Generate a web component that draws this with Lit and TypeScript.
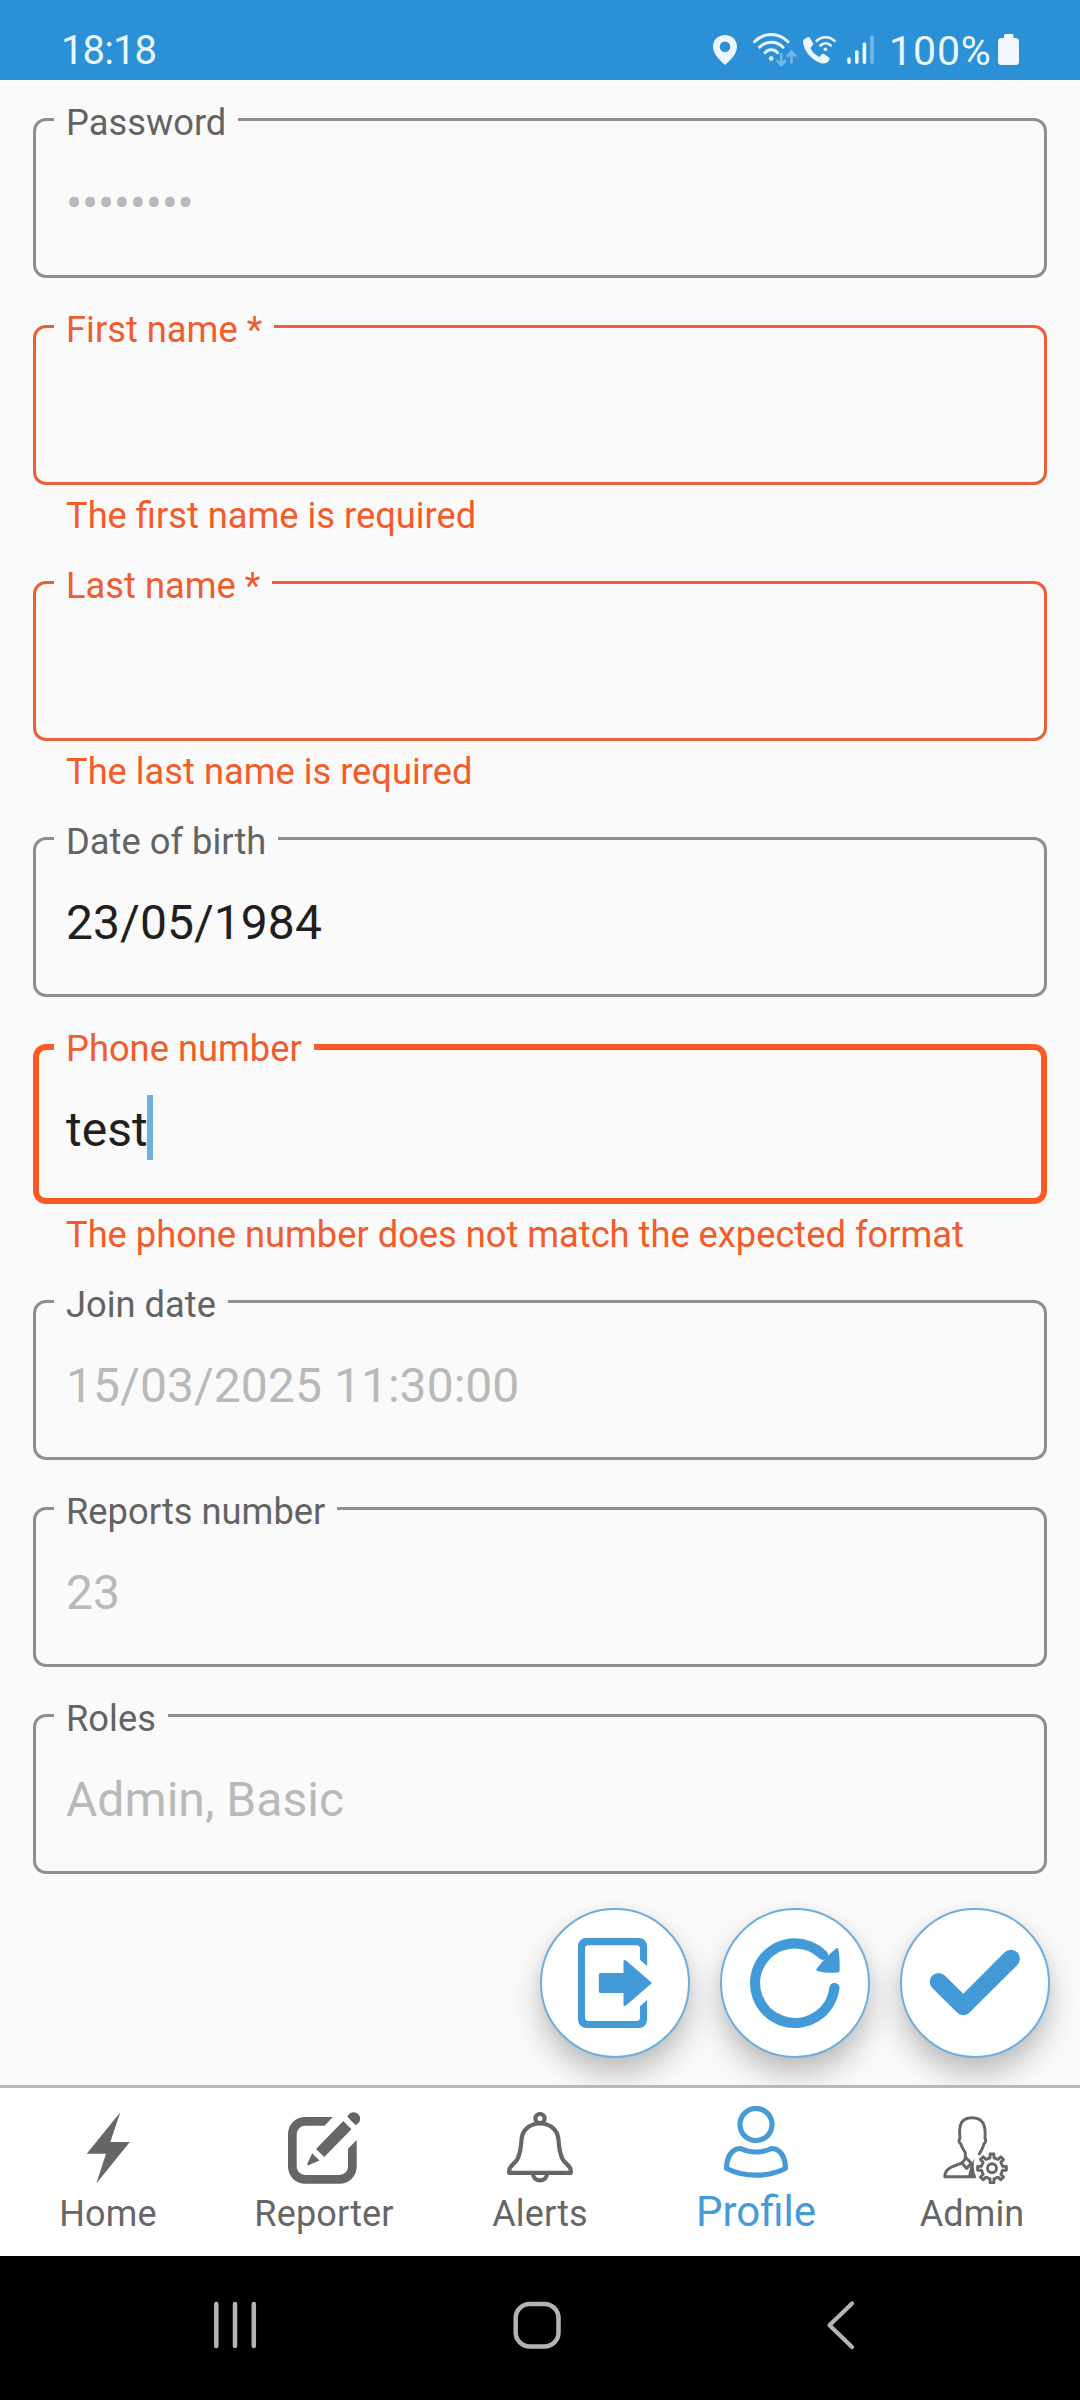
import { LitElement, html, svg, css, nothing } from "lit";
import { customElement, property } from "lit/decorators.js";
import { classMap } from "lit/directives/class-map.js";

interface Field {
  label: string;
  value: string;
  disabled?: boolean;
  masked?: boolean;
  focused?: boolean;
  error?: string;
}

const FIELDS: Field[] = [
  { label: "Password", value: "••••••••", disabled: true, masked: true },
  { label: "First name *", value: "", error: "The first name is required" },
  { label: "Last name *", value: "", error: "The last name is required" },
  { label: "Date of birth", value: "23/05/1984" },
  {
    label: "Phone number",
    value: "test",
    focused: true,
    error: "The phone number does not match the expected format",
  },
  { label: "Join date", value: "15/03/2025 11:30:00", disabled: true },
  { label: "Reports number", value: "23", disabled: true },
  { label: "Roles", value: "Admin, Basic", disabled: true },
];

/** Outline of a cog with square teeth, centred on (cx, cy). */
function gearPath(cx: number, cy: number, outer: number, root: number, teeth: number): string {
  const points: string[] = [];
  const step = (Math.PI * 2) / teeth;
  for (let i = 0; i < teeth; i++) {
    const a = i * step - Math.PI / 2;
    for (const [r, d] of [
      [root, -0.24],
      [outer, -0.17],
      [outer, 0.17],
      [root, 0.24],
    ]) {
      const t = a + d * step;
      points.push(`${(cx + r * Math.cos(t)).toFixed(2)} ${(cy + r * Math.sin(t)).toFixed(2)}`);
    }
  }
  return `M${points.join("L")}Z`;
}

const TAB_ICONS: Record<string, unknown> = {
  Home: svg`<path fill="currentColor" d="M48.3 .2 14.7 41.7H34L24.3 71.6 57.8 30H38.3Z"/>`,
  Reporter: svg`
    <path fill="currentColor" d="M44.8 5H17A17 17 0 0 0 0 22V54.7a17 17 0 0 0 17 17H51.7a17 17 0 0 0 17-17V28L60 36.8V54.5A8.5 8.5 0 0 1 51.500 63H17.2A8.500 8.500 0 0 1 8.700 54.500V22.200A8.500 8.500 0 0 1 17.200 13.700H36.500Z"/>
    <path fill="currentColor" d="M55.300 9 63.400 17.200 36.200 45 28 37ZM24.200 41.300 31.500 48.400 20.500 53.200Q18.800 53.500 19.300 51.800ZM59.400 4.800A6.500 6.500 0 1 1 67.400 13Z"/>`,
  Alerts: svg`
    <g fill="none" stroke="currentColor" stroke-width="4.200">
      <circle cx="36" cy="6.600" r="4.600"/>
      <path stroke-linejoin="round" d="M36 11.500C25.500 11.500 18.500 18 17.600 27C17 36 16 42 13.500 47C10.500 52.500 5.200 53.500 5.200 59V60.900H66.800V59C66.800 53.500 61.500 52.500 58.500 47C56 42 55 36 54.400 27C53.500 18 46.500 11.500 36 11.500Z"/>
      <path d="M28.800 62A7.300 7.700 0 0 0 43.200 62"/>
    </g>`,
  Profile: svg`
    <g fill="none" stroke="currentColor" stroke-width="5.200" stroke-linejoin="round">
      <circle cx="36" cy="18.500" r="16"/>
      <path d="M6.600 62.500C6.600 51 11.500 42.800 20.500 42.500Q28 46 36 46T51.500 42.500C60.500 42.800 65.400 51 65.400 62.500Q52 69.200 36 69.200T6.600 62.500Z"/>
    </g>`,
  Admin: svg`
    <g fill="none" stroke="currentColor" stroke-width="2.900" stroke-linejoin="round">
      <path d="M29.300 46.500V40.500C27 37 25.300 34.500 24.900 31.800C22.800 30.500 22.300 28 24 26.500C22.500 13 25 5.700 36 5.700C47 5.700 50 13 49 26.500C50.300 28 49.800 30.500 47.900 31.800C47.300 35 45.600 38.500 42.700 43"/>
      <path d="M26.500 50.800C17 54 8.800 56.500 8.800 64.700H39.500"/>
      <path d="M30 45.800 35.300 51.300 30.700 56.500 25.900 51Z"/>
      <path d="${gearPath(56, 56.300, 14.500, 10.700, 8)}"/>
      <circle cx="56" cy="56.300" r="4.500"/>
    </g>
    <path fill="currentColor" d="M38.500 46.500 34.500 54 31.700 65.500H40.300C37.500 59 37 53 38.500 46.500Z"/>`,
};

const ACTIONS = [
  {
    name: "Sign out",
    icon: svg`
      <path fill="currentColor" d="M46 30H99A8 8 0 0 1 107.100 38V58L100 51.800V40A3 3 0 0 0 97.500 37.200H47.500A3 3 0 0 0 45 40V110A3 3 0 0 0 47.500 112.900H97.500A3 3 0 0 0 100 110V98.200L107.100 92V112A8 8 0 0 1 99 119.900H46A8 8 0 0 1 38 112V38A8 8 0 0 1 46 30Z"/>
      <path fill="currentColor" d="M60.500 65H83.500V53.500Q83.700 51 86 52.500L112 75 86 97.500Q83.700 99 83.500 96.500V85H60.500Q58.800 85 58.800 83.200V66.800Q58.800 65 60.500 65Z"/>`,
  },
  {
    name: "Reset",
    icon: svg`
      <path fill="none" stroke="currentColor" stroke-width="10.200" stroke-linecap="round" d="M114.400 80A39.800 39.800 0 1 1 103 47"/>
      <path fill="currentColor" d="M109.800 46 116 40.400Q117.600 39.200 118.300 41Q120 50 119.600 62.800Q119.500 64.400 118 64.500Q107 65.500 98 63.300Q95.200 62.300 96.800 60.500L102.500 53.500Z"/>`,
  },
  {
    name: "Save",
    icon: svg`<path fill="none" stroke="currentColor" stroke-width="17.800" stroke-linecap="round" stroke-linejoin="round" d="M38.600 73.800 63.300 98.300 111 50.600"/>`,
  },
];

@customElement("form-field")
class FormField extends LitElement {
  @property({ attribute: false }) field!: Field;

  static styles = css`
    :host {
      display: block;
    }
    .box {
      --line: 3px;
      position: relative;
      box-sizing: border-box;
      height: 160px;
      border: var(--line) solid #8f8f8f;
      border-radius: 13px;
      display: flex;
      align-items: center;
      padding: 11px calc(33px - var(--line)) 0;
    }
    .label {
      position: absolute;
      top: calc(-13px - var(--line));
      left: calc(21px - var(--line));
      padding: 0 12px;
      background: #fafafa;
      color: #636363;
      font-size: 36.3px;
      line-height: 36px;
      white-space: nowrap;
    }
    .value {
      color: #1f1f1f;
      font-size: 48px;
      line-height: 64px;
      letter-spacing: 0.05px;
      white-space: nowrap;
    }
    .disabled .value {
      color: #b9b9b9;
    }
    .masked .value {
      letter-spacing: -0.25px;
    }
    .caret {
      width: 6px;
      height: 65px;
      margin: -4px 0 0 -1px;
      background: #70b0db;
    }
    .invalid {
      border-color: #ea6034;
    }
    .invalid .label {
      color: #f15c2c;
    }
    .focused {
      --line: 6px;
      border-color: #ff5a26;
    }
    .error {
      margin-top: 10px;
      height: 39px;
      padding: 0 33px;
      color: #f55a28;
      font-size: 36.25px;
      line-height: 42px;
      white-space: nowrap;
    }
  `;

  render() {
    const f = this.field;
    const classes = {
      box: true,
      disabled: !!f.disabled,
      masked: !!f.masked,
      invalid: !!f.error,
      focused: !!f.focused,
    };
    return html`
      <div class=${classMap(classes)}>
        <span class="label">${f.label}</span>
        <span class="value">${f.value}</span>
        ${f.focused ? html`<span class="caret"></span>` : nothing}
      </div>
      ${f.error ? html`<div class="error">${f.error}</div>` : nothing}
    `;
  }
}

@customElement("app-root")
class AppRoot extends LitElement {
  static styles = css`
    :host {
      display: flex;
      flex-direction: column;
      width: 1080px;
      height: 2400px;
      overflow: hidden;
      background: #fafafa;
      font-family: Roboto, "Liberation Sans", sans-serif;
    }
    svg {
      display: block;
      flex: none;
    }
    .status {
      flex: none;
      height: 80px;
      box-sizing: border-box;
      padding: 0 61px 0 60px;
      display: flex;
      align-items: center;
      justify-content: space-between;
      background: #2b90d5;
      color: #e9f7ff;
      font-size: 40px;
    }
    .clock,
    .percent {
      line-height: 48px;
      padding-top: 21px;
    }
    .clock {
      padding-left: 1px;
      letter-spacing: -0.9px;
    }
    .indicators {
      display: flex;
      align-items: center;
    }
    .indicators svg {
      height: 80px;
    }
    .percent {
      width: 109px;
      box-sizing: border-box;
      font-size: 41px;
      letter-spacing: 0.9px;
      white-space: nowrap;
    }
    .content {
      flex: 1;
      min-height: 0;
      overflow: hidden;
      display: flex;
      flex-direction: column;
      justify-content: space-between;
    }
    .form {
      display: flex;
      flex-direction: column;
      gap: 47px;
      padding: 38px 33px 0;
    }
    .actions {
      display: flex;
      justify-content: flex-end;
      gap: 30px;
      padding: 0 30px 27px;
    }
    .action {
      box-sizing: border-box;
      width: 150px;
      height: 150px;
      padding: 0;
      border: 2px solid #6eaedb;
      border-radius: 50%;
      background: #fff;
      color: #429ad8;
      display: flex;
      align-items: center;
      justify-content: center;
      box-shadow: 0 17px 30px rgba(0, 0, 0, 0.24), 0 2px 12px rgba(0, 0, 0, 0.04);
    }
    .tabs {
      flex: none;
      height: 171px;
      box-sizing: border-box;
      border-top: 3px solid #b9b9b9;
      background: #fff;
      display: grid;
      grid-template-columns: repeat(5, 1fr);
    }
    .tab {
      display: flex;
      flex-direction: column;
      align-items: center;
      padding-top: 24px;
      gap: 8px;
      color: #666;
      font-size: 36px;
      line-height: 44px;
      letter-spacing: 0.15px;
    }
    .tab.active {
      padding-top: 18px;
      gap: 10px;
      color: #469ad6;
      font-size: 42px;
      line-height: 48px;
      letter-spacing: 0;
    }
    .system {
      flex: none;
      height: 144px;
      background: #000;
      display: grid;
    }
  `;

  render() {
    return html`
      <header class="status">
        <span class="clock">18:18</span>
        <div class="indicators">
          <svg width="40" viewBox="713 0 40 80" fill="#ecf6fe">
            <path fill-rule="evenodd" d="M725 35C718 35 713 40 713 46.800C713 54 719 59.500 725 65C731 59.500 737 54 737 46.800C737 40 732 35 725 35ZM725 41.400A5.300 5.300 0 1 1 725 52A5.300 5.300 0 1 1 725 41.400Z"/>
          </svg>
          <svg width="50" viewBox="753 0 50 80" fill="none" stroke="#e9f7ff" stroke-width="3" stroke-linecap="round">
            <path d="M754.500 41.700C764 32 778.500 32 788 41.700M759.500 47.200C766 40.500 776.500 40.500 783 47.200M765 52.700C768.500 48.800 774 48.800 777.600 52.700"/>
            <circle cx="771.200" cy="58.500" r="2.300" fill="#e9f7ff" stroke="none"/>
            <path stroke="#73b6e4" stroke-width="2.700" d="M781.300 54V64.500M777.500 61 781.300 65 785 61M791.500 62.500V52.500M787.700 55.800 791.500 52 795.300 55.800"/>
          </svg>
          <svg width="44" viewBox="803 0 44 80" fill="none" stroke="#e9f7ff" stroke-linecap="round">
            <path fill="#e9f7ff" stroke="none" d="M803 41Q804 38.500 808.500 37Q809.500 37 810 38L813.300 43.500Q813.500 44.500 812.500 45.500L810.500 48Q812 53 819.500 57L821.500 54.500Q822.500 53.500 824 54L829 57.500Q830.300 58.500 829.500 60Q827 63.800 822.500 63.500C812 61 803 50 803 41Z"/>
            <path stroke-width="2.500" d="M816.500 41C822 36 829.500 36 834.600 41M820.500 45.500C823.500 42.500 828 42.500 830.800 45.500"/>
            <circle cx="825.400" cy="49.200" r="1.800" fill="#e9f7ff" stroke="none"/>
          </svg>
          <svg width="42" viewBox="847 0 42 80" fill="none" stroke="#e9f7ff" stroke-width="3.600" stroke-linecap="round">
            <path d="M849 59V62.200M856.800 52V62.200M864.400 44V62.200"/>
            <path stroke="#73b6e4" d="M872 37V62.200"/>
          </svg>
          <span class="percent">100%</span>
          <svg width="21" viewBox="998 0 21 80" fill="#f0f7ff">
            <path d="M1005.500 34H1012Q1013.500 34 1013.500 35.500V38H1015.500Q1019 38 1019 41.500V61.500Q1019 65 1015.500 65H1001.500Q998 65 998 61.500V41.500Q998 38 1001.500 38H1004V35.500Q1004 34 1005.500 34Z"/>
          </svg>
        </div>
      </header>

      <main class="content">
        <div class="form">
          ${FIELDS.map((f) => html`<form-field .field=${f}></form-field>`)}
        </div>
        <div class="actions">
          ${ACTIONS.map(
            (a) => html`
              <button class="action" aria-label=${a.name}>
                <svg width="150" height="150" viewBox="0 0 150 150">${a.icon}</svg>
              </button>
            `
          )}
        </div>
      </main>

      <nav class="tabs">
        ${Object.entries(TAB_ICONS).map(
          ([name, icon]) => html`
            <div class=${classMap({ tab: true, active: name === "Profile" })}>
              <svg width="72" height="72" viewBox="0 0 72 72">${icon}</svg>
              <span>${name}</span>
            </div>
          `
        )}
      </nav>

      <footer class="system">
        <svg width="1080" height="144" viewBox="0 0 1080 144" fill="none" stroke="#b4b4b4" stroke-width="4.500" stroke-linecap="round">
          <path d="M216.300 48V90M235 48V90M253.800 48V90"/>
          <rect x="515.700" y="48" width="42.800" height="42.500" rx="14"/>
          <path stroke-linejoin="round" stroke-width="4.200" d="M852 47.500 829.500 69.200 852 91"/>
        </svg>
      </footer>
    `;
  }
}
